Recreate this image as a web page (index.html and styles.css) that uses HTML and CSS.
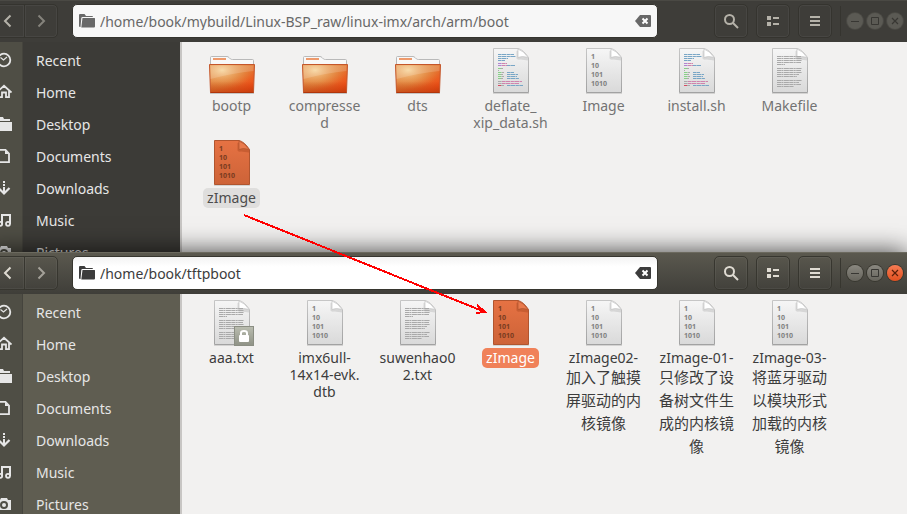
FILE: index.html
```html
<!DOCTYPE html>
<html lang="en">
<head>
<meta charset="utf-8">
<title>Files</title>
<link rel="stylesheet" href="styles.css">
</head>
<body>
<svg class="defs" aria-hidden="true">
  <defs>
    <linearGradient id="paper" x1="0" y1="0" x2="0" y2="1"><stop offset="0" stop-color="#f6f6f6"/><stop offset="1" stop-color="#d9d9d9"/></linearGradient>
    <linearGradient id="paperSel" x1="0" y1="0" x2="0" y2="1"><stop offset="0" stop-color="#e67243"/><stop offset="1" stop-color="#cd6338"/></linearGradient>
    <linearGradient id="edge" x1="0" y1="0" x2="0" y2="1"><stop offset="0" stop-color="#c6c6c6"/><stop offset="1" stop-color="#a2a2a2"/></linearGradient>
    <linearGradient id="front" x1="0" y1="0" x2="1" y2="1"><stop offset="0" stop-color="#e79055"/><stop offset=".5" stop-color="#e27a35"/><stop offset=".85" stop-color="#ee4e16"/><stop offset="1" stop-color="#d8430f"/></linearGradient>
    <radialGradient id="glow" cx=".28" cy=".2" r=".7"><stop offset="0" stop-color="#f8d9a0" stop-opacity=".95"/><stop offset="1" stop-color="#e29a48" stop-opacity="0"/></radialGradient>
    <linearGradient id="low" x1="0" y1="0" x2="0" y2="1"><stop offset=".6" stop-color="#b83a0c" stop-opacity="0"/><stop offset="1" stop-color="#b83a0c" stop-opacity=".6"/></linearGradient>
    <linearGradient id="lockbg" x1="0" y1="0" x2="0" y2="1"><stop offset="0" stop-color="#babdb0"/><stop offset="1" stop-color="#8f9286"/></linearGradient>
  </defs>
  <symbol id="page" viewBox="0 0 48 48">
    <path d="M6 47.5h36" stroke="#000" stroke-opacity=".12"/>
    <path d="M6.500 2.500H31Q36 3.500 41.500 11.500V46.500H6.500Z" fill="url(#paper)" stroke="url(#edge)"/>
    <path d="M29.500 5V12.500Q30 14 33 13.500L41 14.500V12L32 4Z" fill="#000" opacity=".1"/>
    <path d="M31 3L31 11.500Q35 9.500 41 11.500Q37 5 31 3Z" fill="#fff" stroke="#c4c4c4" stroke-width=".7"/>
  </symbol>
  <symbol id="page-selected" viewBox="0 0 48 48">
    <path d="M6 47.500h36" stroke="#000" stroke-opacity=".12"/>
    <path d="M6.500 2.500H31Q36 3.500 41.500 11.500V46.500H6.500Z" fill="url(#paperSel)" stroke="#b0552f"/>
    <path d="M29.500 5V12.500Q30 14 33 13.500L41 14.500V12L32 4Z" fill="#802c08" opacity=".25"/>
    <path d="M31 3L31 11.500Q35 9.500 41 11.500Q37 5 31 3Z" fill="#e97a4c" stroke="#b0552f" stroke-width=".7"/>
  </symbol>
  <symbol id="digits" viewBox="0 0 48 48">
    <g font-family="'Open Sans', sans-serif" font-weight="700" font-size="7" fill="currentColor">
      <text x="11" y="13">1</text><text x="11" y="22">10</text><text x="11" y="31">101</text><text x="11" y="40">1010</text>
    </g>
  </symbol>
  <symbol id="lines" viewBox="0 0 48 48">
    <path d="M11 10.500h24M11 12.500h25M11 14.500h25M11 16.500h24M11 18.500h8M11 22.500h25M11 24.500h24M11 26.500h25M11 28.500h22M11 30.500h20M11 34.500h25M11 36.500h22M11 38.500h24M11 40.500h17" stroke="#a9a9a9" stroke-dasharray="4 .4 2 .5 5 .4"/>
  </symbol>
  <symbol id="code" viewBox="0 0 48 48">
    <g fill="none" stroke-dasharray="3 .4 5 .5">
      <path stroke="#78a6c6" d="M11 8.500h16M11 10.500h18M11 12.500h10M11 14.500h7M20 19.500h8M20 26.500h7M20 28.500h11M20 30.500h10M20 32.500h12M20 39.500h16"/>
      <path stroke="#b183d0" d="M11 17.500h4M11 19.500h4"/>
      <path stroke="#d083ad" d="M15 17.500h5M15 19.500h5M15 35.500h20M15 37.500h17"/>
      <path stroke="#86d286" d="M11 22.500h3M11 26.500h4M11 28.500h3M11 30.500h4M11 32.500h3"/>
      <path stroke="#aaa" d="M14 22.500h2M11 24.500h1M15 26.500h2M14 28.500h2M15 30.500h2M14 32.500h2M11 35.500h4M11 37.500h4M14 39.500h3"/>
      <path stroke="#d84b62" d="M11 39.500h3"/>
    </g>
  </symbol>
  <symbol id="folder" viewBox="0 0 48 48">
    <path d="M2 47.500h44" stroke="#000" stroke-opacity=".18"/>
    <path d="M2.500 19V11.500q0-1 1-1H19q1 0 2 1l1.500 1.500q.8.500 2 .5H44.500q1 0 1 1V19Z" fill="#f8f8f8" stroke="#b9b9b9"/>
    <path d="M5 13h13" stroke="#ee9a6c" stroke-width="2"/>
    <path d="M1.500 18.500H46.500L45.500 46.500H2.500Z" fill="url(#front)"/>
    <path d="M1.500 18.500H46.500L45.500 46.500H2.500Z" fill="url(#glow)"/>
    <path d="M1.500 18.500H46.500L45.500 46.500H2.500Z" fill="url(#low)" stroke="#c4562b"/>
    <path d="M2.500 19.500H45.500V25Q25 27 2.500 33Z" fill="#fff" opacity=".16"/>
    <path d="M2.500 46.500h43" stroke="#b1360b"/>
  </symbol>
  <symbol id="lock" viewBox="0 0 48 48">
    <rect x="26.500" y="28.500" width="19" height="19" fill="url(#lockbg)" stroke="#8b8e83"/>
    <path d="M33 37v-2q0-2 3-2t3 2v2" fill="none" stroke="#fff" stroke-width="2"/>
    <rect x="31" y="37" width="10" height="7" rx="1" fill="#fff"/>
  </symbol>
  <symbol id="back" viewBox="0 0 16 16"><path d="M10.500 2.500L5 8l5.500 5.500" fill="none" stroke="currentColor" stroke-width="2"/></symbol>
  <symbol id="forward" viewBox="0 0 16 16"><path d="M5.500 2.500L11 8l-5.500 5.500" fill="none" stroke="currentColor" stroke-width="2"/></symbol>
  <symbol id="open-folder" viewBox="0 0 16 16"><path d="M0 2q0-1 1-1h4.500l1.500 2h6q1 0 1 1v0H3.500Q2.500 4 2.300 5L1.500 14H1q-1 0-1-1Z M3.500 5H15.500q.5 0 .5.500V13.500q0 1-1 1H2.300Z" fill="currentColor"/></symbol>
  <symbol id="clear" viewBox="0 0 16 16"><path d="M0 8L5 2H15q1 0 1 1V13q0 1-1 1H5Z" fill="currentColor"/><path d="M7.500 5.500l5 5m0-5l-5 5" stroke="#fff" stroke-width="2"/></symbol>
  <symbol id="search" viewBox="0 0 16 16"><circle cx="6.500" cy="6.500" r="4.500" fill="none" stroke="currentColor" stroke-width="2"/><path d="M10 10l5 5" stroke="currentColor" stroke-width="2"/></symbol>
  <symbol id="list" viewBox="0 0 16 16"><path d="M2 3h4v4H2zM2 9h4v4H2zM8 4h6v2H8zM8 10h6v2H8z" fill="currentColor"/></symbol>
  <symbol id="menu" viewBox="0 0 16 16"><path d="M3 3h10v2H3zM3 7h10v2H3zM3 11h10v2H3z" fill="currentColor"/></symbol>
  <symbol id="recent" viewBox="0 0 16 16"><circle cx="8" cy="8" r="6.300" fill="none" stroke="currentColor" stroke-width="1.800"/><path d="M4.500 5.500L7.500 8l3.500-3" fill="none" stroke="currentColor" stroke-width="1.200"/></symbol>
  <symbol id="home" viewBox="0 0 16 16"><path d="M.5 8.500L8 1.800l7.500 6.700M3 7v6.200h3V8.500h4v4.700h3V7" fill="none" stroke="currentColor" stroke-width="1.800"/></symbol>
  <symbol id="desk" viewBox="0 0 16 16"><path d="M0 5V1h7l1 2h6v2zM0 6h16v9H0z" fill="currentColor"/></symbol>
  <symbol id="docs" viewBox="0 0 16 16"><path d="M3 1.800h6.500L13 5.500v8.700H3z" fill="none" stroke="currentColor" stroke-width="1.800"/><path d="M9 2v4h4z" fill="currentColor"/></symbol>
  <symbol id="down" viewBox="0 0 16 16"><path d="M7 1h2v2H7zM7 4h2v2H7zM7 7h2v6H7z" fill="currentColor"/><path d="M2.500 8L8 13.500L13.500 8" fill="none" stroke="currentColor" stroke-width="2.200"/></symbol>
  <symbol id="music" viewBox="0 0 16 16"><path d="M6 12V3h8v9" fill="none" stroke="currentColor" stroke-width="2"/><circle cx="4.200" cy="11.800" r="2" fill="none" stroke="currentColor" stroke-width="1.800"/><circle cx="12" cy="11.800" r="2" fill="none" stroke="currentColor" stroke-width="1.800"/></symbol>
  <symbol id="camera" viewBox="0 0 16 16"><path fill-rule="evenodd" d="M1 4h3l1-2h6l1 2h3v10H1zM8 5a4 4 0 1 0 0 8a4 4 0 1 0 0-8z" fill="currentColor"/><circle cx="8" cy="9" r="2" fill="currentColor"/></symbol>
  <symbol id="min" viewBox="0 0 16 16"><path d="M4 8.500h8" stroke="currentColor"/></symbol>
  <symbol id="max" viewBox="0 0 16 16"><path d="M4.500 4.500h7v7h-7z" fill="none" stroke="currentColor"/></symbol>
  <symbol id="close" viewBox="0 0 16 16"><path d="M5 5l6 6m0-6l-6 6" stroke="currentColor" stroke-width="1.200"/></symbol>
</svg>

<main class="desktop">
  <section class="window inactive" aria-label="boot">
    <header class="bar">
      <nav class="history">
        <button aria-label="Back"><svg><use href="#back"/></svg></button>
        <button class="off" aria-label="Forward"><svg><use href="#forward"/></svg></button>
      </nav>
      <div class="path">
        <svg><use href="#open-folder"/></svg>
        <input type="text" aria-label="Location" value="/home/book/mybuild/Linux-BSP_raw/linux-imx/arch/arm/boot">
        <button aria-label="Clear"><svg><use href="#clear"/></svg></button>
      </div>
      <div class="tools">
        <button aria-label="Search"><svg><use href="#search"/></svg></button>
        <button aria-label="List view"><svg><use href="#list"/></svg></button>
        <button aria-label="Menu"><svg><use href="#menu"/></svg></button>
      </div>
      <div class="controls">
        <button aria-label="Minimize"><svg><use href="#min"/></svg></button>
        <button aria-label="Maximize"><svg><use href="#max"/></svg></button>
        <button class="close" aria-label="Close"><svg><use href="#close"/></svg></button>
      </div>
    </header>
    <div class="body">
      <nav class="places">
        <a href="#recent"><svg><use href="#recent"/></svg><span>Recent</span></a>
        <a href="#home"><svg><use href="#home"/></svg><span>Home</span></a>
        <a href="#desk"><svg><use href="#desk"/></svg><span>Desktop</span></a>
        <a href="#docs"><svg><use href="#docs"/></svg><span>Documents</span></a>
        <a href="#down"><svg><use href="#down"/></svg><span>Downloads</span></a>
        <a href="#music"><svg><use href="#music"/></svg><span>Music</span></a>
        <a href="#camera"><svg><use href="#camera"/></svg><span>Pictures</span></a>
      </nav>
      <ul class="files">
        <li><svg><use href="#folder"/></svg><span class="name">bootp</span></li>
        <li><svg><use href="#folder"/></svg><span class="name">compresse<br>d</span></li>
        <li><svg><use href="#folder"/></svg><span class="name">dts</span></li>
        <li><svg><use href="#page"/><use href="#code"/></svg><span class="name">deflate_<br>xip_data.sh</span></li>
        <li><svg><use href="#page"/><use href="#digits"/></svg><span class="name">Image</span></li>
        <li><svg><use href="#page"/><use href="#code"/></svg><span class="name">install.sh</span></li>
        <li><svg><use href="#page"/><use href="#lines"/></svg><span class="name">Makefile</span></li>
        <li class="selected"><svg><use href="#page-selected"/><use href="#digits"/></svg><span class="name">zImage</span></li>
      </ul>
    </div>
  </section>

  <section class="window active" aria-label="tftpboot">
    <header class="bar">
      <nav class="history">
        <button aria-label="Back"><svg><use href="#back"/></svg></button>
        <button class="off" aria-label="Forward"><svg><use href="#forward"/></svg></button>
      </nav>
      <div class="path">
        <svg><use href="#open-folder"/></svg>
        <input type="text" aria-label="Location" value="/home/book/tftpboot">
        <button aria-label="Clear"><svg><use href="#clear"/></svg></button>
      </div>
      <div class="tools">
        <button aria-label="Search"><svg><use href="#search"/></svg></button>
        <button aria-label="List view"><svg><use href="#list"/></svg></button>
        <button aria-label="Menu"><svg><use href="#menu"/></svg></button>
      </div>
      <div class="controls">
        <button aria-label="Minimize"><svg><use href="#min"/></svg></button>
        <button aria-label="Maximize"><svg><use href="#max"/></svg></button>
        <button class="close" aria-label="Close"><svg><use href="#close"/></svg></button>
      </div>
    </header>
    <div class="body">
      <nav class="places">
        <a href="#recent"><svg><use href="#recent"/></svg><span>Recent</span></a>
        <a href="#home"><svg><use href="#home"/></svg><span>Home</span></a>
        <a href="#desk"><svg><use href="#desk"/></svg><span>Desktop</span></a>
        <a href="#docs"><svg><use href="#docs"/></svg><span>Documents</span></a>
        <a href="#down"><svg><use href="#down"/></svg><span>Downloads</span></a>
        <a href="#music"><svg><use href="#music"/></svg><span>Music</span></a>
        <a href="#camera"><svg><use href="#camera"/></svg><span>Pictures</span></a>
      </nav>
      <ul class="files">
        <li><svg><use href="#page"/><use href="#lines"/><use href="#lock"/></svg><span class="name">aaa.txt</span></li>
        <li><svg><use href="#page"/><use href="#digits"/></svg><span class="name">imx6ull-<br>14x14-evk.<br>dtb</span></li>
        <li><svg><use href="#page"/><use href="#lines"/></svg><span class="name">suwenhao0<br>2.txt</span></li>
        <li class="selected"><svg><use href="#page-selected"/><use href="#digits"/></svg><span class="name">zImage</span></li>
        <li><svg><use href="#page"/><use href="#digits"/></svg><span class="name">zImage02-<span class="han" lang="zh">加入了触摸<br>屏驱动的内<br>核镜像</span></span></li>
        <li><svg><use href="#page"/><use href="#digits"/></svg><span class="name">zImage-01-<span class="han" lang="zh">只修改了设<br>备树文件生<br>成的内核镜<br>像</span></span></li>
        <li><svg><use href="#page"/><use href="#digits"/></svg><span class="name">zImage-03-<span class="han" lang="zh">将蓝牙驱动<br>以模块形式<br>加载的内核<br>镜像</span></span></li>
      </ul>
    </div>
  </section>

  <svg class="arrow" viewBox="0 0 244 102" aria-hidden="true"><path d="M1 1L242 98M234 91L242 98L233 99" fill="none" stroke="#f00" stroke-width="2" shape-rendering="crispEdges"/></svg>
</main>
</body>
</html>
```

FILE: styles.css
```css
* { box-sizing: border-box; }

body {
  margin: 0;
  font: 14px/17px "Noto Sans", "Noto Sans CJK SC", sans-serif;
}

button {
  display: flex;
  align-items: center;
  justify-content: center;
  padding: 0;
  border: 0;
  background: none;
  color: inherit;
}

svg { flex: none; width: 16px; height: 16px; }
.defs { position: absolute; width: 0; height: 0; }

.desktop {
  position: relative;
  display: grid;
  grid-template-rows: 252fr 262fr;
  height: 100vh;
  overflow: hidden;
}

/* The windows run past the left edge of the screen. */
.window {
  display: flex;
  flex-direction: column;
  min-height: 0;
  margin-left: -16px;
}

.active {
  --ink: #dfdbd2;
  --line: #37362f;
  --side: #5f5d51;
  --text: #3c3c3c;
  position: relative;
  z-index: 1;
  box-shadow: 0 0 24px rgba(0, 0, 0, 0.75);
}

.inactive {
  --ink: #b5b2a9;
  --line: #35342f;
  --side: #3c3b37;
  --text: #737373;
}

.bar {
  display: flex;
  align-items: center;
  flex: none;
  height: 42px;
  padding: 0 4px 0 7px;
  color: var(--ink);
  background: #3e3d39;
  box-shadow: inset 0 1px #4a4944;
}

.active .bar {
  background: linear-gradient(#5b594f, #3f3e39);
  box-shadow: inset 0 1px #6b695e;
}

.history { display: flex; }

.history button,
.tools button {
  width: 34px;
  height: 34px;
  border: 1px solid var(--line);
  border-radius: 5px;
  box-shadow: inset 0 0 0 1px rgba(255, 255, 255, 0.05);
}

.history button { border-radius: 5px 0 0 5px; }
.history .off { margin-left: -1px; border-radius: 0 5px 5px 0; }
.off svg { opacity: 0.6; }

.path {
  display: flex;
  align-items: center;
  gap: 5px;
  flex: 1;
  height: 34px;
  margin: 0 56px 0 14px;
  padding: 0 6px;
  border: 1px solid var(--line);
  border-radius: 5px;
  background: #f7f7f7;
  color: #686868;
}

.active .path {
  background: linear-gradient(#f3f3f3, #fff 30%);
  color: #3c3c3c;
}

.path input {
  flex: 1;
  min-width: 0;
  padding: 0;
  border: 0;
  background: none;
  color: inherit;
  font: inherit;
}

.tools { display: flex; gap: 8px; }

.controls {
  display: flex;
  align-items: center;
  gap: 4px;
  height: 30px;
  margin-left: 8px;
  padding-left: 6px;
  border-left: 1px solid var(--line);
}

.controls button {
  width: 16px;
  height: 16px;
  border-radius: 50%;
  background: #5b5a54;
  color: #383733;
  box-shadow: 0 0 0 1px #4a4944;
}

.active .controls button {
  background: linear-gradient(#8a8880, #66645c);
  box-shadow: 0 0 0 1px #38372f;
}

.active .controls .close {
  background: linear-gradient(#f67c54, #e2501f);
  color: #5a1f08;
}

.body { display: flex; flex: 1; min-height: 0; }

.places {
  flex: none;
  width: 198px;
  padding-top: 2px;
  overflow: hidden;
  border-right: 2px solid #c8c6c4;
  background: linear-gradient(90deg, #4f4e45 38px, #45443d 38px 39px, var(--side) 39px);
}

.places a {
  display: flex;
  align-items: center;
  gap: 24px;
  height: 32px;
  padding-left: 12px;
  color: #e6e6e6;
  text-decoration: none;
}

.files {
  display: grid;
  grid-template-columns: repeat(auto-fill, 93px);
  align-content: start;
  row-gap: 5px;
  flex: 1;
  margin: 0;
  padding: 4px 3px;
  overflow: hidden;
  list-style: none;
  background: #f2f1f0;
  color: var(--text);
}

.files li {
  display: flex;
  flex-direction: column;
  align-items: center;
  gap: 2px;
}

.files svg { width: 48px; height: 48px; color: #808080; }

.name {
  padding: 1px 4px 2px;
  border-radius: 5px;
  text-align: center;
  white-space: nowrap;
}

.han { display: block; font-size: 15px; line-height: 23px; }

.selected svg { color: #7a3b20; }
.inactive .selected .name { background: #dfdedd; color: #4c4c4c; }
.active .selected .name { background: #f08159; color: #fff; }

.arrow {
  position: absolute;
  z-index: 2;
  top: 214px;
  left: 243px;
  width: 244px;
  height: 102px;
  pointer-events: none;
}
```
